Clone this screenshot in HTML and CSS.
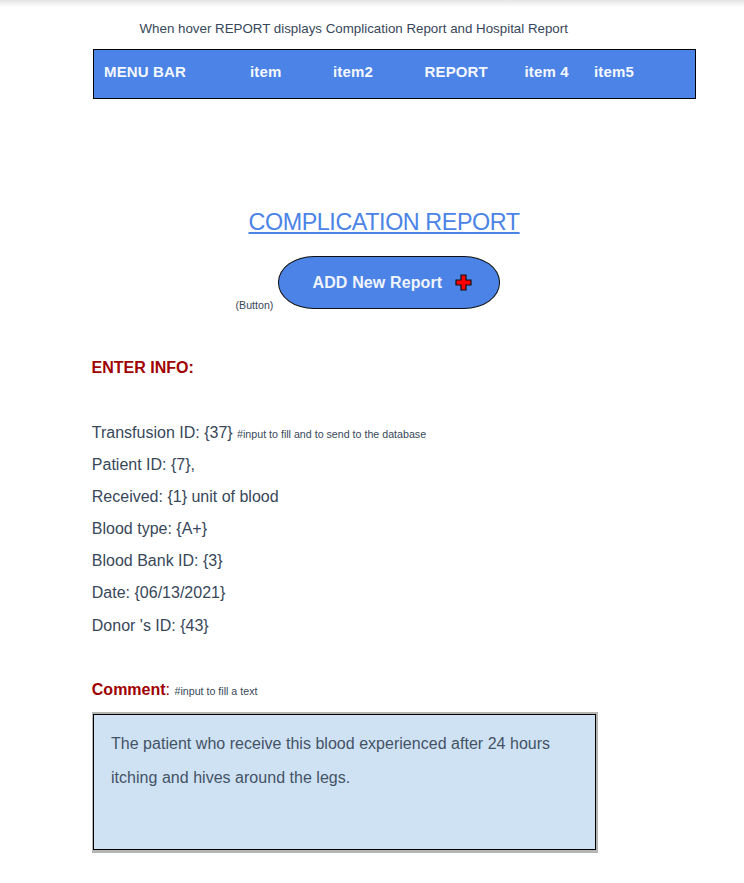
FILE: index.html
```html
<!DOCTYPE html>
<html lang="en">
<head>
<meta charset="utf-8">
<title>Complication Report</title>
<link rel="stylesheet" href="styles.css">
</head>
<body>
<div class="page">
  <p class="hint">When hover REPORT displays Complication Report and Hospital Report</p>
  <nav class="menu">
    <span>MENU BAR</span><span>item</span><span>item2</span><span>REPORT</span><span>item 4</span><span>item5</span>
  </nav>
  <h1 class="title"><span>COMPLICATION REPORT</span></h1>
  <div class="action">
    <span class="action-label">(Button)</span>
    <button class="add" type="button">
      <span>ADD New Report</span>
      <svg class="plus" width="17" height="17" viewBox="0 0 17 17"><path d="M6 1H11V6H16V11H11V16H6V11H1V6H6Z" fill="#f00" stroke="#111" stroke-width="1.2"/></svg>
    </button>
  </div>
  <section class="info">
    <h2>ENTER INFO:</h2>
    <p>Transfusion ID: {37} <small>#input to fill and to send to the database</small></p>
    <p>Patient ID: {7},</p>
    <p>Received: {1} unit of blood</p>
    <p>Blood type: {A+}</p>
    <p>Blood Bank ID: {3}</p>
    <p>Date: {06/13/2021}</p>
    <p>Donor 's ID: {43}</p>
    <p class="comment-label"><span><b>Comment</b>:</span> <small>#input to fill a text</small></p>
  </section>
  <div class="comment"><p>The patient who receive this blood experienced after 24 hours<br>itching and hives around the legs.</p></div>
</div>
</body>
</html>
```

FILE: styles.css
```css
* { box-sizing: border-box; }
body { margin: 0; background: #fff; color: #38475a; font-family: "Liberation Sans", Arial, sans-serif; }
h1, h2, p { margin: 0; font-weight: normal; }
.page { height: 883px; padding: 19px 48px 0 92px; overflow: hidden; background: linear-gradient(#e4e4e4, #fff 7px); }
.hint { height: 30px; margin-left: 47.5px; font-size: 13.33px; line-height: 20px; white-space: nowrap; }
.menu {
  display: grid;
  grid-template-columns: 146px 83px 91.5px 100px 69.5px auto;
  width: 603px; height: 50px; margin-left: 1px; padding: 0 0 5px 10px;
  align-items: center; border: 1px solid #000; background: #4b83e6;
  color: #f4f7fd; font-size: 15px; font-weight: bold; letter-spacing: 0.15px;
}
.title { height: 53px; margin: 104px 0 0 156.5px; font-size: 23.33px; line-height: 38px; letter-spacing: -0.42px; color: #4b83e6; white-space: nowrap; }
.title span { text-decoration: underline; text-decoration-thickness: 2px; text-underline-offset: 2px; }
.action { display: flex; margin-left: 143.5px; height: 53px; }
.action-label { width: 42.5px; align-self: flex-end; font-size: 10.67px; line-height: 8px; }
.add {
  display: flex; align-items: center; gap: 13px; width: 222px; height: 53px; padding: 0 0 0 33.5px;
  border: 1px solid #111; border-radius: 36px / 26px;
  background: #4b83e6; color: #f0f4fc; font: bold 16px "Liberation Sans", Arial, sans-serif; letter-spacing: 0.13px;
}
.plus { flex: none; }
.info { margin-top: 43px; font-size: 16px; line-height: 32.2px; }
.info h2 { margin: 0 0 33px -0.4px; font-size: 16px; font-weight: bold; color: #a00000; }
.info p { margin-left: -0.2px; }
.info h2 + p { margin-bottom: -0.8px; }
.info small { font-size: 10.67px; line-height: 0; }
.info .comment-label { margin-top: 32.2px; }
.comment-label span { color: #a00000; }
.comment {
  width: 506px; height: 141px; margin-top: 5.4px; padding: 2px 2px 3px 1px; background: #b5b5b5;
}
.comment p { height: 136px; padding: 12px 17px; border: 1px solid #000; background: #cfe2f3; color: #445266; font-size: 16px; line-height: 34px; letter-spacing: 0.025px; white-space: nowrap; }
```
